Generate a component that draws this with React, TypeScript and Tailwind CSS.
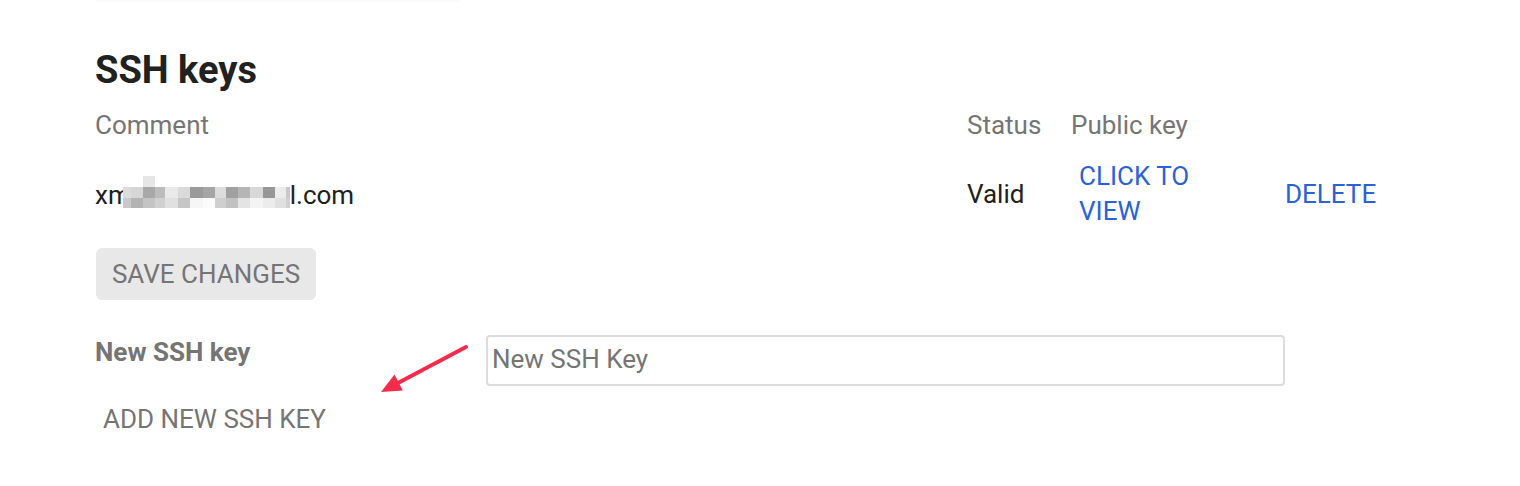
import React from 'react';

const mosaicEdges = [0, 8, 20, 32, 42, 55, 67, 80, 92, 103, 115, 127, 140, 152, 163, 167];
const mosaicTop = ['#dcdcdc', '#d6d6d6', '#a8a8a8', '#bcbcbc', '#e9e9e9', '#dadada', '#9a9a9a', '#a5a5a5', '#dcdcdc', '#a0a0a0', '#b5b5b5', '#d8d8d8', '#979797', '#ececec', '#c8c8c8'];
const mosaicBottom = ['#c9c9c9', '#b3b3b3', '#c4c4c4', '#d0d0d0', '#e0e0e0', '#c6c6c6', '#f6f6f6', '#fbfbfb', '#cfcfcf', '#c2c2c2', '#e4e4e4', '#f4f4f4', '#ececec', '#e0e0e0', '#d0d0d0'];

// pixelated part of the e-mail address
function Mosaic() {
    return (
        <svg width="167" height="34" viewBox="0 0 167 34" className="inline-block align-[-6px] -ml-[8px]">
            <rect x="20" y="0" width="12" height="11" fill="#e6e6e6" />
            {mosaicTop.map((c, i) => (
                <rect key={`t${i}`} x={mosaicEdges[i]} y="11" width={mosaicEdges[i + 1] - mosaicEdges[i]} height="11" fill={c} />
            ))}
            {mosaicBottom.map((c, i) => (
                <rect key={`b${i}`} x={mosaicEdges[i]} y="22" width={mosaicEdges[i + 1] - mosaicEdges[i]} height="10" fill={c} />
            ))}
        </svg>
    );
}

function App() {
    return (
        <div className="relative w-[1520px] h-[486px] overflow-hidden bg-white font-['Roboto','Liberation_Sans',sans-serif]">
            <div className="h-[2px] w-[365px] ml-[95px] bg-[#fafafa]" />

            <section className="pl-[95px]">
                {/* Title */}
                <h1 className="mt-[44px] text-[38px] leading-[48px] font-bold text-[#212121]">SSH keys</h1>

                {/* Table header */}
                <div className="mt-[16px] grid grid-cols-[872px_104px_206px_auto] text-[26px] leading-[30px] text-[#757575]">
                    <span>Comment</span>
                    <span>Status</span>
                    <span>Public key</span>
                    <span />
                </div>

                {/* Key row */}
                <div className="mt-[13px] h-[82px] grid grid-cols-[872px_104px_206px_auto] items-center text-[26px] leading-[35px] text-[#212121]">
                    <span className="whitespace-nowrap">
                        xm<Mosaic />l.com
                    </span>
                    <span>Valid</span>
                    <div>
                        <button className="w-[140px] px-2 py-[6px] text-left uppercase text-[#2a62d8]">Click to view</button>
                    </div>
                    <div>
                        <button className="px-2 uppercase text-[#2a62d8]">Delete</button>
                    </div>
                </div>

                <button className="mt-[13px] ml-px w-[220px] h-[52px] flex items-center justify-center rounded-[6px] bg-[#e8e8e8] text-[26px] uppercase text-[#757575]">
                    Save changes
                </button>

                {/* New key */}
                <div className="mt-[35px] flex items-start">
                    <label className="w-[391px] pt-[2px] text-[26px] leading-[30px] font-bold text-[#757575]">New SSH key</label>
                    <input
                        placeholder="New SSH Key"
                        className="w-[799px] h-[51px] border-2 border-[#dcdcdc] rounded-[4px] pl-[4px] pb-[3px] text-[26px] text-[#212121] placeholder:text-[#757575] outline-none"
                    />
                </div>

                <button className="mt-[18px] px-2 text-[26px] leading-[30px] uppercase text-[#757575]">Add new SSH key</button>
            </section>

            {/* annotation arrow */}
            <svg className="absolute left-0 top-0 pointer-events-none" width="1520" height="486">
                <line x1="466" y1="347" x2="397" y2="383.5" stroke="#f42c4c" strokeWidth="4" strokeLinecap="round" />
                <polygon points="381,392 394.5,374.6 402.9,390.6" fill="#f42c4c" />
            </svg>
        </div>
    );
}

export default App;
